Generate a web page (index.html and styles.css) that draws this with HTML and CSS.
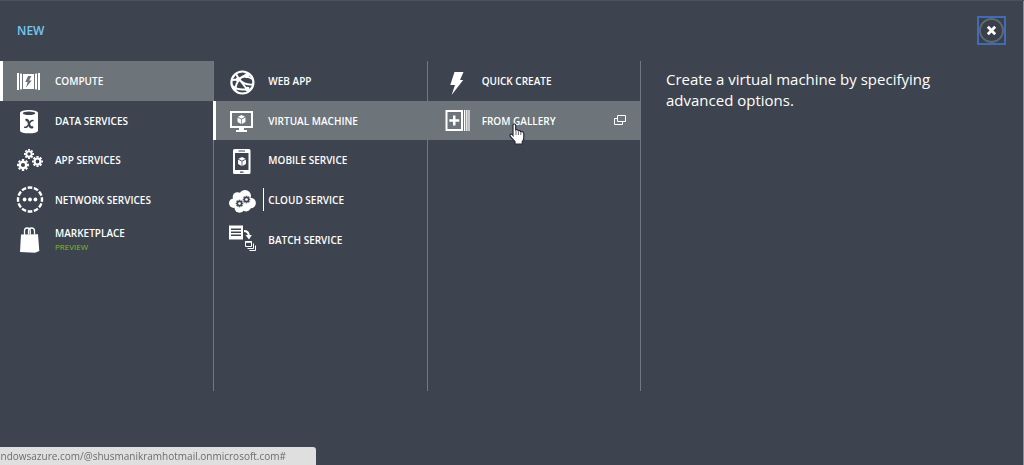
FILE: index.html
```html
<!DOCTYPE html>
<html lang="en">
<head>
<meta charset="utf-8">
<meta name="viewport" content="width=device-width, initial-scale=1">
<title>New</title>
<link rel="stylesheet" href="styles.css">
</head>
<body>
<svg class="defs" aria-hidden="true">
  <symbol id="gear" viewBox="-6 -6 12 12">
    <circle r="3.2" fill="none" stroke="currentColor" stroke-width="2.3"/>
    <path d="M0-6V-4M0 4V6M-6 0H-4M4 0H6M-4.2-4.2L-2.9-2.9M2.9 2.9L4.2 4.2M-4.2 4.2L-2.9 2.9M2.9-2.9L4.2-4.2" stroke="currentColor" stroke-width="2.4"/>
  </symbol>
  <symbol id="cube" viewBox="0 0 10 10">
    <path d="M5 0L9 2L5 4.2L1 2ZM.6 2.8L4.6 5V10L.6 7.7ZM9.4 2.8L5.4 5V10L9.4 7.7Z" fill="currentColor"/>
  </symbol>
</svg>
<main class="drawer">
  <header class="top">
    <h1 class="title">NEW</h1>
    <button class="close" type="button" aria-label="Close">
      <svg viewBox="0 0 26 26"><circle cx="13" cy="13" r="12" fill="none" stroke="#626873" stroke-width="2"/><path d="M9.2 9.2L16.8 16.8M16.8 9.2L9.2 16.8" stroke="#fff" stroke-width="3"/></svg>
    </button>
  </header>
  <div class="columns">
    <nav class="column" aria-label="Categories">
      <button class="item selected" type="button">
        <svg class="icon" viewBox="0 0 30 30"><path d="M3 7H5V24H3ZM6 7.4L8 7.8V23.2L6 23.6ZM21 7.8L23 7.4V23.6L21 23.2ZM24 7H26V24H24Z"/><path fill-rule="evenodd" d="M9 8H20V23H9ZM14 10L11.3 16H13.6L12 21.5L17.7 14.4H15.2L17.4 10Z"/></svg>
        <span class="label">COMPUTE</span>
      </button>
      <button class="item" type="button">
        <svg class="icon" viewBox="0 0 30 30"><path d="M6 8C6 4 24 4 24 8V25.5C24 29.3 6 29.3 6 25.5Z"/><ellipse cx="15" cy="8.2" rx="6.2" ry="1.7" fill="#3e444f"/><path d="M11.5 15.2C14 14.4 14.6 16.5 15 18.7C15.4 21 16.4 23.6 19 21.8" fill="none" stroke="#3e444f" stroke-width="2.3"/><path d="M19.6 15.6C16.6 14.4 15.8 17.5 14.6 19.6C13.4 21.8 12 23 10.2 22" fill="none" stroke="#3e444f" stroke-width="1.5"/></svg>
        <span class="label">DATA SERVICES</span>
      </button>
      <button class="item" type="button">
        <svg class="icon" viewBox="0 0 30 30"><use href="#gear" x="10" y="4" width="10" height="10"/><use href="#gear" x="3" y="14" width="12" height="12"/><use href="#gear" x="18" y="11" width="11" height="11"/></svg>
        <span class="label">APP SERVICES</span>
      </button>
      <button class="item" type="button">
        <svg class="icon" viewBox="0 0 30 30"><circle cx="16" cy="14.5" r="12" fill="none" stroke="#fff" stroke-width="2.4" pathLength="120" stroke-dasharray="7.5 2.5" stroke-dashoffset="3.75"/><circle cx="10.6" cy="14.5" r="1.9"/><circle cx="16" cy="14.5" r="1.9"/><circle cx="21.4" cy="14.5" r="1.9"/></svg>
        <span class="label">NETWORK SERVICES</span>
      </button>
      <button class="item" type="button">
        <svg class="icon" viewBox="0 0 30 30"><path d="M7 10.5L24 10.2L25.3 27.1L21 28.8L6 27.9Z"/><path d="M10.5 11.5V7Q10.5 4 13 4Q16.3 4 16.3 7V10.5M14.5 10.5V7Q14.5 4 17.5 4Q20.5 4 20.5 7V10.5" fill="none" stroke="#fff" stroke-width="1.3"/></svg>
        <span class="label">MARKETPLACE<small class="tag">PREVIEW</small></span>
      </button>
    </nav>
    <nav class="column" aria-label="Compute">
      <button class="item" type="button">
        <svg class="icon" viewBox="0 0 30 30"><g fill="none" stroke="#fff"><circle cx="15.4" cy="16.5" r="11" stroke-width="2.2"/><path d="M9 8L12 13L21 24.5M20 8.5Q10 12 8 23M5 14L11 13.5Q17 8 25.5 13M12 13.5Q18 19.5 26 18.5M5.5 20Q11 25 21 23" stroke-width="1.9"/></g><circle cx="11" cy="13.6" r="2.4"/><circle cx="20" cy="9.5" r="2.5"/><circle cx="20.5" cy="23" r="2.3"/><circle cx="8.3" cy="22.8" r="1.8"/></svg>
        <span class="label">WEB APP</span>
      </button>
      <button class="item selected" type="button">
        <svg class="icon" viewBox="0 0 30 30"><path fill-rule="evenodd" d="M3 6H26V23H3ZM5 8V21H24V8Z"/><path d="M12 23H17V25H20V27H9V25H12Z"/><use href="#cube" x="10" y="10" width="9" height="9"/></svg>
        <span class="label">VIRTUAL MACHINE</span>
      </button>
      <button class="item" type="button">
        <svg class="icon" viewBox="0 0 30 30"><path fill-rule="evenodd" d="M7.5 4H22Q23.5 4 23.5 5.5V27.5Q23.5 29 22 29H7.5Q6 29 6 27.5V5.5Q6 4 7.5 4ZM8 8V25H21.5V8ZM11.5 5.5V6.5H18V5.5ZM13 26.5V27.7H16.5V26.5Z"/><use href="#cube" x="10.5" y="12" width="9" height="9"/></svg>
        <span class="label">MOBILE SERVICE</span>
      </button>
      <button class="item" type="button">
        <svg class="icon" viewBox="0 0 30 30"><circle cx="6.8" cy="18.2" r="4.8"/><circle cx="10.5" cy="12" r="4.8"/><circle cx="18" cy="11" r="6"/><circle cx="23.7" cy="18" r="5.2"/><circle cx="12.5" cy="22.8" r="5"/><circle cx="19" cy="21.5" r="5"/><path d="M8 12H22V23H8Z"/><g class="cut"><use href="#gear" x="8.5" y="14.5" width="8" height="8"/><use href="#gear" x="15.5" y="10.5" width="8" height="8"/></g></svg>
        <span class="label marked">CLOUD SERVICE</span>
      </button>
      <button class="item" type="button">
        <svg class="icon" viewBox="0 0 30 30"><path fill-rule="evenodd" d="M2 1.5H16V15.5H2ZM4 4.5V6H14V4.5ZM4 7.5V9H14V7.5ZM4 10.5V12H14V10.5Z"/><path d="M17 7Q21.5 7 21.8 11.5" fill="none" stroke="#fff" stroke-width="2"/><path d="M18.5 11H24.8L22 15.5Z"/><path d="M18.5 17.5H24.5V22.5H18.5ZM26.5 19.5V24.5H20.5M28.5 21.5V26.5H22.5" fill="none" stroke="#fff"/><path d="M18.5 17H24.5V18.8H18.5Z"/></svg>
        <span class="label">BATCH SERVICE</span>
      </button>
    </nav>
    <nav class="column" aria-label="Virtual machine">
      <button class="item" type="button">
        <svg class="icon" viewBox="0 0 30 30"><path d="M13.5 6H22.5L19 14H22.2L10.6 29L14 19H9.3Z"/></svg>
        <span class="label">QUICK CREATE</span>
      </button>
      <button class="item hover" type="button">
        <svg class="icon" viewBox="0 0 30 30"><path fill-rule="evenodd" d="M4.5 5H22V26H4.5ZM6.5 7V24H20V7Z"/><path d="M23 5H24.3V26H23ZM25.2 5H26.5V26H25.2ZM27.4 5H28.6V26H27.4ZM12 10.5H14.5V14.3H18.3V16.8H14.5V20.6H12V16.8H8.3V14.3H12Z"/></svg>
        <span class="label">FROM GALLERY</span>
        <svg class="popout" viewBox="0 0 12 10"><path d="M3.5.5H11.5V6.5H3.5ZM3.5 3.5H.5V9.5H8.5V6.5" fill="none" stroke="#fff"/></svg>
        <svg class="pointer" viewBox="0 0 16 22"><path d="M4 12V2.5Q4 1 5.3 1Q6.7 1 6.7 2.5V7Q8.7 6.1 9.3 7.8Q11.2 7 11.8 8.8Q14.8 8 14.8 11V14.5Q14.8 17 13.3 18.5V21H6V18.8L1.3 13.5Q.5 12 1.6 11.3Q2.6 10.7 4 12.5Z" fill="#fff" stroke="#262b35" stroke-width="1.2"/><path d="M7 8V12M9.4 8.5V12M11.8 9.5V12" stroke="#262b35" stroke-width=".7"/></svg>
      </button>
    </nav>
    <p class="description">Create a virtual machine by specifying advanced options.</p>
  </div>
</main>
<footer class="status"><span>windowsazure.com/@shusmanikramhotmail.onmicrosoft.com#</span></footer>
</body>
</html>
```
FILE: styles.css
```css
* { box-sizing: border-box; }

body {
  margin: 0;
  min-height: 100vh;
  background: #3e444f;
  color: #fff;
  font-family: "Open Sans", "Noto Sans", sans-serif;
}

.defs { position: absolute; width: 0; height: 0; }

.drawer {
  min-height: 100vh;
  border-top: 1px solid #4b515c;
  box-shadow: inset -1px 0 #8b9098;
}

.top {
  display: flex;
  align-items: center;
  justify-content: space-between;
  height: 60px;
  padding: 0 18px 1px 17px;
}

.title {
  margin: 0;
  color: #72c8f2;
  font-size: 12px;
  font-weight: 600;
}

.close {
  width: 29px;
  height: 29px;
  padding: 0;
  border: 2px solid #3f6cb5;
  background: #3a404a;
}

.close svg { display: block; width: 100%; height: 100%; }

.columns {
  display: grid;
  grid-template-columns: 5fr 5fr 5fr 9fr;
  min-height: 330px;
}

.column {
  display: grid;
  grid-template-rows: repeat(5, 1fr);
  padding-bottom: 132px;
  box-shadow: 1px 0 #737982;
}

.item {
  position: relative;
  display: flex;
  align-items: center;
  gap: 11px;
  min-width: 0;
  padding: 0 14px;
  border: 0;
  background: none;
  color: inherit;
  font: 600 10px/13px "Open Sans", "Noto Sans", sans-serif;
  text-align: left;
}

.selected, .hover { background: #6d747a; }
.selected { box-shadow: inset 3px 0 #fff; }

.icon { flex: none; width: 30px; height: 30px; fill: #fff; color: #fff; }
.cut { color: #3e444f; }

.label { flex: 1; padding-top: 2px; white-space: nowrap; }

.marked::before {
  content: "";
  position: absolute;
  top: 8px;
  bottom: 8px;
  left: 50px;
  border-left: 1px solid #fff;
}

.tag {
  display: block;
  color: #7fba2c;
  font-size: 8px;
  font-weight: 400;
}

.popout { width: 12px; height: 10px; }

.pointer {
  position: absolute;
  top: 22px;
  left: 82px;
  width: 16px;
  height: 22px;
}

.description {
  margin: 0;
  padding: 8px 60px 0 26px;
  font-size: 15px;
  line-height: 21px;
}

.status {
  position: fixed;
  bottom: 0;
  left: 0;
  display: flex;
  justify-content: flex-end;
  width: 316px;
  padding-right: 30px;
  overflow: hidden;
  border-radius: 0 3px 0 0;
  background: #dfdfdf;
  color: #6b6d70;
  font-size: 10px;
  line-height: 18px;
}
```
